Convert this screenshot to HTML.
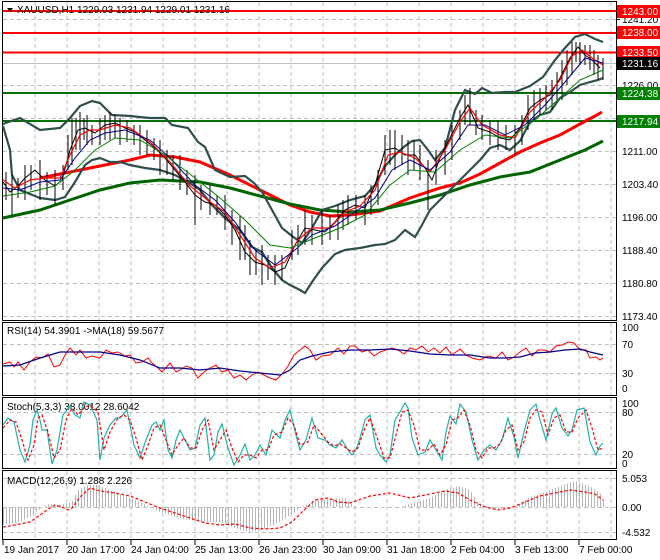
<!DOCTYPE html><html><head><meta charset="utf-8"><style>
html,body{margin:0;padding:0;background:#fff;}
body{width:660px;height:560px;overflow:hidden;position:relative;font-family:"Liberation Sans",sans-serif;}
svg{position:absolute;left:0;top:0;}
text{font-family:"Liberation Sans",sans-serif;font-size:10px;fill:#000;}
</style></head><body>
<svg width="660" height="560" viewBox="0 0 660 560">
<defs>
<pattern id="hs" width="3" height="10" patternUnits="userSpaceOnUse"><rect x="0" y="0" width="1" height="10" fill="#b4b4b4"/></pattern>
</defs>
<rect x="0" y="0" width="660" height="560" fill="#fff"/>
<g stroke="#000" stroke-width="1" fill="none">
<rect x="2.5" y="1.5" width="614" height="319"/>
<rect x="2.5" y="322.5" width="614" height="73"/>
<rect x="2.5" y="397.5" width="614" height="71"/>
<rect x="2.5" y="470.5" width="614" height="69"/>
</g>
<g stroke="#c0c0c0" stroke-dasharray="4,3" stroke-width="1">
<path d="M35 2V320M67 2V320M99 2V320M131 2V320M163 2V320M195 2V320M227 2V320M259 2V320M291 2V320M323 2V320M355 2V320M387 2V320M419 2V320M451 2V320M483 2V320M515 2V320M547 2V320M579 2V320M611 2V320"/>
<path d="M35 323V395M67 323V395M99 323V395M131 323V395M163 323V395M195 323V395M227 323V395M259 323V395M291 323V395M323 323V395M355 323V395M387 323V395M419 323V395M451 323V395M483 323V395M515 323V395M547 323V395M579 323V395M611 323V395"/>
<path d="M35 398V468M67 398V468M99 398V468M131 398V468M163 398V468M195 398V468M227 398V468M259 398V468M291 398V468M323 398V468M355 398V468M387 398V468M419 398V468M451 398V468M483 398V468M515 398V468M547 398V468M579 398V468M611 398V468"/>
<path d="M35 471V539M67 471V539M99 471V539M131 471V539M163 471V539M195 471V539M227 471V539M259 471V539M291 471V539M323 471V539M355 471V539M387 471V539M419 471V539M451 471V539M483 471V539M515 471V539M547 471V539M579 471V539M611 471V539"/>
<path d="M3 19.5H616M3 85.5H616M3 118.5H616M3 151.5H616M3 184.5H616M3 217.5H616M3 250.5H616M3 283.5H616M3 316.5H616"/>
<path d="M3 344.5H616M3 373.5H616M3 412.5H616M3 454.5H616M3 478.5H616M3 507.5H616M3 532.5H616"/>
</g>
<line x1="3" y1="63.5" x2="616" y2="63.5" stroke="#c0c0c0"/>
<g stroke-width="2">
<line x1="3" y1="11" x2="616" y2="11" stroke="#ff0000"/>
<line x1="3" y1="33" x2="616" y2="33" stroke="#ff0000"/>
<line x1="3" y1="52.5" x2="616" y2="52.5" stroke="#ff0000"/>
<line x1="3" y1="93" x2="616" y2="93" stroke="#007000"/>
<line x1="3" y1="121" x2="616" y2="121" stroke="#007000"/>
</g>
<polyline fill="none" stroke="#ff0000" stroke-width="3" points="40,178 70,172 100,166 130,160 150,155 175,157 200,162 230,175 260,190 290,205 310,212 330,216 350,215 380,211 410,198 440,188 460,183 480,174 500,163 520,152 540,143 560,135 580,124 595,116 602,112"/>
<polyline fill="none" stroke="#006400" stroke-width="3" points="3,218 40,210 70,200 100,190 130,183 160,180 200,182 230,188 260,196 290,204 320,210 350,212 380,210 410,203 440,195 470,185 500,177 530,172 560,160 585,150 603,141"/>
<g fill="none" stroke="#2f4f4f" stroke-width="2.2">
<polyline points="3,124 20,118 40,130 60,128 70,118 80,106 92,101 100,103 112,115 130,116 150,118 165,118 172,125 188,128 198,142 205,147 215,170 230,177 245,176 254,183 262,192 272,210 282,228 292,236 302,243 312,228 322,210 335,206 350,200 365,196 375,185 385,166 395,155 405,146 412,141 420,140 428,150 435,160 445,148 455,110 465,90 475,94 482,88 492,93 505,92 515,92 530,86 543,77 555,60 565,48 575,37 585,34 595,39 603,42"/>
<polyline points="3,126 10,150 12,175 20,190 40,198 55,200 65,197 75,182 85,165 92,160 100,158 110,162 120,162 130,165 145,168 160,170 175,175 188,182 200,190 212,205 225,218 240,230 252,247 262,252 272,268 282,280 290,285 300,290 305,293 312,282 322,268 335,254 345,250 360,248 375,245 385,244 395,240 405,230 415,237 422,225 430,210 440,200 450,190 460,180 470,170 480,160 490,148 500,145 510,150 520,141 530,122 540,115 550,112 560,98 570,92 580,85 590,82 598,80 603,78"/>
</g>
<polyline fill="none" stroke="#000" stroke-width="1" points="3,182 10,192 18,186 25,178 35,170 45,180 55,186 62,180 70,150 78,130 85,128 95,133 105,125 115,123 125,128 135,132 145,140 155,148 165,158 175,170 185,182 195,195 205,202 215,205 225,215 235,230 245,252 255,262 265,265 275,272 285,268 295,245 305,228 315,230 325,232 335,222 345,210 355,205 365,208 375,185 385,150 395,148 405,155 415,155 425,168 432,180 440,158 450,138 460,118 468,105 478,128 490,132 500,138 510,140 520,128 530,108 540,100 550,95 560,78 570,58 578,47 585,55 592,60 600,68"/>
<g stroke="#000" stroke-width="1">
<path d="M12 175V215M25 165V200M40 160V200M55 170V205M72 118V165M80 112V150M87 115V145M100 118V145M110 112V140M120 118V145M140 125V155M160 140V175M180 155V190M195 175V225M210 185V215M225 195V230M240 215V260M250 240V275M262 245V285M275 255V285M292 230V260M305 210V245M322 210V245M338 205V240M348 195V225M365 195V225M378 170V205M385 135V175M395 130V170M408 140V175M420 145V180M428 160V210M445 140V175M460 110V140M470 88V125M482 115V140M498 120V150M515 125V155M528 95V130M540 88V115M552 80V110M562 60V100M572 42V75M580 42V65M590 45V70M598 55V80M603 58V80"/>
<path d="M6 172V200M18 178V198M31 165V190M47 172V195M63 165V190M68 135V170M76 118V150M84 118V140M92 125V145M105 115V140M115 115V138M127 120V142M134 125V145M147 130V155M154 138V160M167 150V175M173 155V180M187 170V195M201 185V210M217 195V215M232 210V245M245 225V260M256 250V275M268 255V280M282 255V280M298 225V255M312 215V245M330 215V240M343 200V230M356 195V220M371 185V215M390 130V165M402 135V165M414 140V170M436 150V185M452 125V160M465 95V125M476 110V135M490 120V145M506 125V150M522 115V145M534 90V120M546 85V110M557 72V100M567 50V85M576 42V62M585 45V65M594 50V75"/>
</g>
<polyline fill="none" stroke="#ff0000" stroke-width="1.2" points="3,180 15,188 30,180 45,178 60,178 70,155 80,135 90,130 100,130 115,125 130,128 150,142 170,162 190,186 210,202 225,212 240,235 255,258 270,268 285,262 298,240 312,228 330,228 345,212 360,206 375,190 388,155 400,152 415,158 430,172 445,150 460,122 470,108 482,125 500,135 515,138 530,112 545,98 560,80 572,56 582,50 592,58 603,65"/>
<polyline fill="none" stroke="#00008b" stroke-width="1" points="3,188 20,190 40,182 60,180 75,158 90,140 105,133 125,130 150,140 170,158 195,185 215,200 235,222 255,250 275,265 295,250 312,235 335,226 355,212 375,198 392,170 410,160 430,170 450,152 468,125 485,125 505,135 525,125 545,105 565,82 585,58 603,63"/>
<polyline fill="none" stroke="#008000" stroke-width="1" points="3,196 30,192 55,186 75,170 95,150 115,138 140,140 165,155 195,178 220,198 245,220 270,245 290,248 315,238 340,228 365,215 390,185 410,170 435,172 460,150 485,135 510,138 535,120 560,98 580,80 603,70"/>
<path d="M7 8 L13 8 L10 12 Z" fill="#000"/>
<text x="17" y="13">XAUUSD,H1  1229.03 1231.94 1229.01 1231.16</text>
<g>
<line x1="616" y1="19.5" x2="620" y2="19.5" stroke="#000"/>
<text x="622" y="23">1241.20</text>
<text x="622" y="89">1226.00</text>
<text x="622" y="155">1211.00</text>
<text x="622" y="188">1203.40</text>
<text x="622" y="221">1196.00</text>
<text x="622" y="254">1188.40</text>
<text x="622" y="287">1180.80</text>
<text x="622" y="320">1173.40</text>
<rect x="617" y="5" width="43" height="13" fill="#ff0000"/><text x="622" y="15" style="fill:#fff">1243.00</text>
<rect x="617" y="26" width="43" height="13" fill="#ff0000"/><text x="622" y="36" style="fill:#fff">1238.00</text>
<rect x="617" y="46" width="43" height="13" fill="#ff0000"/><text x="622" y="56" style="fill:#fff">1233.50</text>
<rect x="617" y="57" width="43" height="13" fill="#000"/><text x="622" y="67" style="fill:#fff">1231.16</text>
<rect x="617" y="87" width="43" height="13" fill="#008000"/><text x="622" y="97" style="fill:#fff">1224.38</text>
<rect x="617" y="115" width="43" height="13" fill="#008000"/><text x="622" y="125" style="fill:#fff">1217.94</text>
</g>
<text x="7" y="334">RSI(14) 54.3901  -&gt;MA(18) 59.5677</text>
<polyline fill="none" stroke="#ff0000" stroke-width="1" points="3,364 10,362 14,367 18,362 24,370 30,362 36,357 42,358 48,354 54,367 60,365 66,353 70,348 76,355 80,350 86,358 92,356 100,358 106,350 112,353 118,352 125,356 130,355 136,363 142,362 148,358 152,363 158,368 162,372 170,363 176,372 180,370 186,366 192,368 198,378 204,372 210,368 216,365 222,372 228,370 234,378 240,375 246,380 252,375 258,372 262,374 270,378 276,380 282,374 288,366 294,355 300,350 305,346 310,350 316,360 322,356 330,355 338,348 344,354 350,346 355,346 362,352 368,350 374,356 380,352 386,350 392,348 398,350 404,354 410,348 416,350 422,346 428,352 434,348 440,353 446,347 452,355 460,349 466,355 472,358 480,360 488,356 496,358 502,352 508,360 514,357 520,352 526,348 532,356 538,350 545,350 550,352 556,346 562,345 568,342 574,343 580,350 586,350 590,358 596,357 600,360 603,358"/>
<polyline fill="none" stroke="#00008b" stroke-width="1.2" points="3,366 20,365 40,358 60,352 80,352 100,352 120,355 140,360 160,368 180,368 200,370 220,368 240,371 260,373 280,375 290,370 300,360 312,356 330,352 350,350 370,350 390,349 410,351 430,354 450,355 470,355 490,358 505,358 520,357 535,353 550,352 565,350 580,349 590,352 603,355"/>
<text x="622" y="331">100</text><text x="622" y="348">70</text><text x="622" y="377">30</text><text x="622" y="392">0</text>
<text x="7" y="410">Stoch(5,3,3) 38.0012 28.6042</text>
<polyline fill="none" stroke="#20b2aa" stroke-width="1.2" points="3,425 8,418 14,422 20,450 25,462 30,445 33,420 37,410 40,420 42,430 47,430 52,464 57,450 63,415 70,406 75,415 80,418 84,402 90,405 97,420 100,460 104,438 110,425 116,418 120,418 127,410 134,445 140,458 146,440 152,425 156,422 160,430 164,420 168,450 172,458 176,440 180,430 185,440 190,450 195,448 200,425 205,418 210,460 214,455 218,432 222,424 228,448 234,465 240,455 245,444 250,460 255,455 260,445 266,455 272,430 280,438 285,420 290,410 296,435 300,450 306,440 312,418 318,438 325,440 330,445 336,448 342,440 348,450 352,455 356,450 360,438 365,420 370,415 376,448 380,455 386,462 390,455 395,420 400,412 405,403 408,408 412,438 418,455 425,452 430,440 436,450 442,460 446,432 450,416 456,424 460,404 466,412 472,440 478,460 484,450 490,445 496,450 502,440 508,418 514,437 518,458 524,432 530,410 536,404 540,420 546,440 552,414 556,408 562,428 568,436 572,430 577,410 584,408 590,442 596,455 600,446 603,443"/>
<polyline fill="none" stroke="#ff0000" stroke-width="1.2" stroke-dasharray="3,2" points="3,428 10,420 16,422 22,440 28,460 34,445 38,418 42,415 48,432 54,458 60,450 66,420 72,408 78,415 84,408 90,405 98,412 104,450 110,432 118,418 124,415 130,420 136,438 142,460 148,445 154,428 160,425 166,440 172,455 178,445 184,438 190,448 196,448 202,430 208,420 214,450 220,440 226,430 232,448 238,462 244,455 250,455 256,458 262,450 268,450 274,435 282,432 288,418 294,425 300,445 308,442 314,425 320,432 328,442 334,446 340,444 346,448 352,452 358,448 364,430 370,418 378,440 384,458 390,458 396,435 402,412 408,410 414,425 420,450 428,450 434,444 440,455 446,445 452,420 458,418 464,410 470,425 476,450 482,458 488,448 494,448 500,444 506,430 512,425 518,450 524,442 530,418 536,410 542,412 548,435 554,418 560,415 566,432 572,432 578,418 586,410 592,428 598,450 603,448"/>
<text x="622" y="407">100</text><text x="622" y="416">80</text><text x="622" y="458">20</text><text x="622" y="467">0</text>
<text x="7" y="484">MACD(12,26,9) 1.288 2.226</text>
<polygon fill="url(#hs)" points="3,507 3,525 20,522 35,514 42,507 50,504 60,505 72,502 78,490 88,485 98,485 110,490 125,496 140,502 150,507 160,512 180,518 200,522 220,522 240,530 250,532 262,530 280,522 295,512 305,505 320,500 345,498 355,507 360,507 380,507 400,507 430,498 445,490 460,486 470,490 478,502 490,508 500,509 515,507 530,497 545,492 560,486 575,481 590,486 600,493 604,500 604,507"/>
<polyline fill="none" stroke="#ff0000" stroke-width="1.2" stroke-dasharray="3,2" points="3,527 15,525 30,522 40,515 50,508 55,505 62,507 68,510 72,508 80,497 90,488 100,491 115,493 130,496 145,502 160,508 175,513 190,518 205,523 220,525 235,524 250,528 265,529 280,528 292,522 302,512 315,500 328,498 338,502 350,503 370,496 390,493 410,498 430,494 445,491 458,493 470,500 485,507 498,510 510,508 525,502 540,496 555,493 570,490 585,492 595,494 603,500"/>
<text x="622" y="482">5.053</text><text x="622" y="511">0.00</text><text x="622" y="536">-4.532</text>
<g stroke="#000"><path d="M3 540V545M67 540V545M131 540V545M195 540V545M259 540V545M323 540V545M387 540V545M451 540V545M515 540V545M579 540V545"/></g>
<text x="4" y="553">19 Jan 2017</text>
<text x="67" y="553">20 Jan 17:00</text>
<text x="131" y="553">24 Jan 04:00</text>
<text x="195" y="553">25 Jan 13:00</text>
<text x="259" y="553">26 Jan 23:00</text>
<text x="323" y="553">30 Jan 09:00</text>
<text x="387" y="553">31 Jan 18:00</text>
<text x="451" y="553">2 Feb 04:00</text>
<text x="515" y="553">3 Feb 13:00</text>
<text x="579" y="553">7 Feb 00:00</text>
</svg>
</body></html>
